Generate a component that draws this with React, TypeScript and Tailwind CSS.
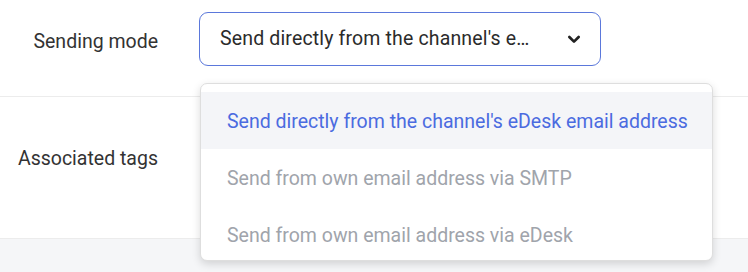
import { useState } from "react";

const options = [
  "Send directly from the channel's eDesk email address",
  "Send from own email address via SMTP",
  "Send from own email address via eDesk",
];

export default function App() {
  const [selected] = useState(0);

  return (
    <div className="relative w-[748px] h-[272px] overflow-hidden bg-white font-['Roboto',sans-serif]">
      <div className="flex h-[97px] border-b border-[#ececec]">
        <div className="w-[158px] pt-[29px] text-right text-[19.5px] leading-[26px] text-[#333]">Sending mode</div>
        <div className="ml-[41px] mt-[12px]">
          <button className="flex items-center w-[402px] h-[54px] rounded-[9px] border-[1.5px] border-[#5b78db] pl-[20px] pr-[18px] text-[19.5px] text-[#2b2b2b]">
            <span className="flex-1 text-left whitespace-nowrap overflow-hidden tracking-[0.15px]">Send directly from the channel's e…</span>
            <svg width="16" height="16" viewBox="0 0 24 24" fill="none" stroke="#222" strokeWidth="4" strokeLinecap="round" strokeLinejoin="round">
              <path d="M5 9l7 7 7-7" />
            </svg>
          </button>
        </div>
      </div>

      <div className="flex h-[141px]">
        <div className="w-[158px] pt-[49px] text-right text-[19.5px] leading-[26px] text-[#333]">Associated tags</div>
      </div>

      <div className="h-[34px] border-t border-[#ececec] bg-[#f5f6f8]" />

      {/* open dropdown menu */}
      <div className="absolute left-[200px] top-[83px] w-[513px] h-[178px] overflow-hidden rounded-[7px] border border-[#dedede] bg-white pt-[8px] shadow-[0_3px_8px_rgba(0,0,0,0.15)]">
        {options.map((opt, i) => (
          <div
            key={opt}
            className={`flex items-center h-[57px] pt-[2px] px-[26px] whitespace-nowrap text-[19.5px] ${
              i === selected ? "bg-[#f4f5f8] text-[#4b6be0]" : "text-[#a0a4ab]"
            }`}
          >
            {opt}
          </div>
        ))}
      </div>
    </div>
  );
}
